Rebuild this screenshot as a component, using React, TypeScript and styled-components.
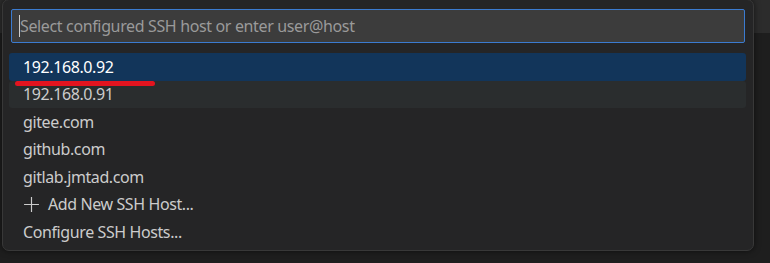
import styled, { createGlobalStyle } from "styled-components";

const GlobalStyle = createGlobalStyle`
  html, body {
    margin: 0;
    padding: 0;
    width: 770px;
    height: 263px;
    overflow: hidden;
    background: #1f1f1f;
  }
  #root {
    height: 100%;
  }
`;

type Item = {
  label: string;
  icon?: boolean;
  state?: "selected" | "hover";
  marked?: boolean;
};

const items: Item[] = [
  { label: "192.168.0.92", state: "selected", marked: true },
  { label: "192.168.0.91", state: "hover" },
  { label: "gitee.com" },
  { label: "github.com" },
  { label: "gitlab.jmtad.com" },
  { label: "Add New SSH Host...", icon: true },
  { label: "Configure SSH Hosts..." },
];

export default function App(): JSX.Element {
  return (
    <Window>
      <GlobalStyle />
      <TitleBar />
      <Editor />
      <QuickPick>
        <InputBox>
          <Caret />
          <Placeholder>Select configured SSH host or enter user@host</Placeholder>
        </InputBox>
        <List>
          {items.map((item) => (
            <Row key={item.label} $state={item.state}>
              {item.icon && (
                <IconBox>
                  <svg width="17" height="17" viewBox="0 0 16 16" fill="none">
                    <path d="M8 1v14M1 8h14" stroke="#cccccc" strokeWidth="1.1" />
                  </svg>
                </IconBox>
              )}
              <Label>{item.label}</Label>
              {item.marked && <Mark />}
            </Row>
          ))}
        </List>
      </QuickPick>
    </Window>
  );
}

const Window = styled.div`
  position: relative;
  width: 770px;
  height: 263px;
  display: flex;
  flex-direction: column;
  font-family: "Noto Sans", "Open Sans", sans-serif;
`;

const TitleBar = styled.div`
  height: 33px;
  background: #2c2c2c;
`;

const Editor = styled.div`
  flex: 1;
  background: #1e1e1e;
`;

const QuickPick = styled.div`
  position: absolute;
  left: 2px;
  top: -1px;
  width: 752px;
  height: 252px;
  box-sizing: border-box;
  background: #252526;
  border: 1px solid #383838;
  border-radius: 7px;
  box-shadow: 0 0 6px rgba(0, 0, 0, 0.55);
  padding: 9px 7px 0 6px;
`;

const InputBox = styled.div`
  position: relative;
  margin: 0 1px 0 2px;
  height: 34px;
  box-sizing: border-box;
  background: #3c3c3c;
  border: 1px solid #3b7bd0;
  border-radius: 2px;
  display: flex;
  align-items: center;
  padding-left: 8px;
`;

const Caret = styled.span`
  position: absolute;
  left: 7px;
  top: 5px;
  width: 1px;
  height: 22px;
  background: #cccccc;
`;

const Placeholder = styled.span`
  color: #9a9a9a;
  font-size: 16px;
  letter-spacing: -0.36px;
`;

const List = styled.div`
  margin-top: 10px;
  display: flex;
  flex-direction: column;
`;

const Row = styled.div<{ $state?: "selected" | "hover" }>`
  position: relative;
  height: 27.5px;
  display: flex;
  align-items: center;
  padding-left: 14px;
  border-radius: 3px;
  color: ${(p) => (p.$state === "selected" ? "#ffffff" : "#cccccc")};
  background: ${(p) =>
    p.$state === "selected" ? "#12355a" : p.$state === "hover" ? "#2a2d2e" : "transparent"};
  font-size: 16px;
  letter-spacing: -0.4px;
`;

const IconBox = styled.span`
  width: 21px;
  height: 20px;
  margin-right: 4px;
  display: flex;
  align-items: center;
  justify-content: flex-start;
`;

const Label = styled.span`
  white-space: nowrap;
`;

const Mark = styled.span`
  position: absolute;
  left: 6px;
  top: 28px;
  width: 140px;
  height: 5px;
  border-radius: 3px;
  background: #e3141f;
  z-index: 1;
`;
